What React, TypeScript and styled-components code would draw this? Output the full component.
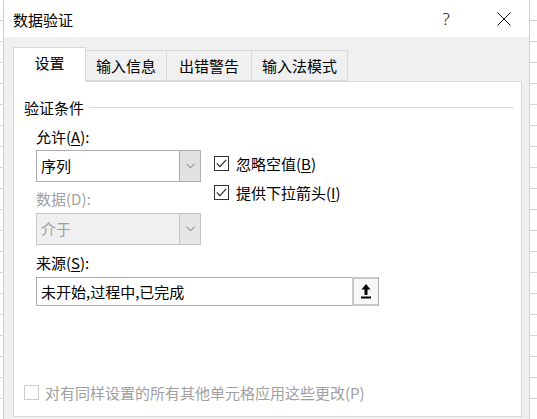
import React from "react"
import styled, { createGlobalStyle } from "styled-components"

const GlobalStyle = createGlobalStyle`
  html, body {
    margin: 0;
    padding: 0;
  }
  body {
    width: 537px;
    height: 419px;
    overflow: hidden;
    background-color: #ffffff;
    background-image: repeating-linear-gradient(
      to bottom,
      transparent 0,
      transparent 20px,
      #d4d4d4 20px,
      #d4d4d4 21px
    );
    font-family: "Noto Sans CJK SC", "Noto Sans", sans-serif;
    font-size: 15px;
    color: #000;
  }
`

const Dialog = styled.div`
  box-sizing: border-box;
  width: 527px;
  height: 419px;
  margin-left: 3px;
  display: flex;
  flex-direction: column;
  background: #f0f0f0;
  border-left: 1px solid #cfcfcf;
  border-right: 1px solid #cfcfcf;
`

const TitleBar = styled.div`
  height: 37px;
  flex: none;
  display: flex;
  align-items: center;
  background: #ffffff;
  padding-left: 9px;
  padding-right: 2px;
`

const Title = styled.span`
  flex: 1;
  line-height: 20px;
  margin-top: 2px;
`

const TitleButton = styled.div<{ $gap?: number }>`
  width: 46px;
  height: 37px;
  display: flex;
  align-items: center;
  justify-content: center;
  margin-right: ${p => p.$gap || 0}px;
  font-family: "Noto Sans", sans-serif;
  font-size: 17px;
  font-weight: 300;
  color: #111;
`

const Body = styled.div`
  flex: 1;
  padding: 10px 7px 0 9px;
`

const TabList = styled.div`
  display: flex;
  align-items: flex-end;
  height: 34px;
`

const Tab = styled.div<{ $width: number; $active?: boolean }>`
  box-sizing: border-box;
  width: ${p => p.$width}px;
  height: ${p => (p.$active ? 35 : 31)}px;
  margin-bottom: ${p => (p.$active ? -1 : 0)}px;
  margin-left: ${p => (p.$active ? 0 : -1)}px;
  position: relative;
  z-index: ${p => (p.$active ? 2 : 1)};
  display: flex;
  align-items: center;
  justify-content: center;
  padding-bottom: ${p => (p.$active ? 4 : 0)}px;
  background: ${p => (p.$active ? "#ffffff" : "#f0f0f0")};
  border: 1px solid #d9d9d9;
  border-bottom: ${p => (p.$active ? "none" : "1px solid #d9d9d9")};
  line-height: 20px;
  &:first-child {
    margin-left: 0;
  }
`

const Panel = styled.div`
  box-sizing: border-box;
  height: 336px;
  display: flex;
  flex-direction: column;
  background: #ffffff;
  border: 1px solid #d9d9d9;
  padding: 15px 7px 14px 10px;
`

const GroupHeader = styled.div`
  display: flex;
  align-items: center;
  height: 20px;
  &::after {
    content: "";
    flex: 1;
    height: 1px;
    margin-left: 5px;
    background: #dcdcdc;
  }
`

const Form = styled.div`
  padding-left: 12px;
  margin-top: 10px;
`

const TopRow = styled.div`
  display: flex;
`

const LeftColumn = styled.div`
  width: 165px;
  display: flex;
  flex-direction: column;
`

const Label = styled.div<{ $disabled?: boolean; $gap?: number }>`
  line-height: 20px;
  margin-bottom: ${p => p.$gap || 0}px;
  color: ${p => (p.$disabled ? "#a0a0a0" : "#000")};
  u {
    text-decoration-thickness: 1px;
    text-underline-offset: 2px;
  }
`

const Combo = styled.div<{ $disabled?: boolean }>`
  box-sizing: border-box;
  height: 32px;
  display: flex;
  border: 1px solid ${p => (p.$disabled ? "#c4c4c4" : "#adadad")};
  background: ${p => (p.$disabled ? "#f0f0f0" : "#ffffff")};
  color: ${p => (p.$disabled ? "#a0a0a0" : "#000")};
`

const ComboText = styled.div`
  flex: 1;
  display: flex;
  align-items: center;
  padding-left: 4px;
  line-height: 20px;
`

const ComboArrow = styled.div<{ $disabled?: boolean }>`
  width: 20px;
  display: flex;
  align-items: center;
  justify-content: center;
  background: ${p => (p.$disabled ? "#e6e6e6" : "#e1e1e1")};
  border-left: 1px solid ${p => (p.$disabled ? "#c4c4c4" : "#adadad")};
`

const CheckColumn = styled.div`
  display: flex;
  flex-direction: column;
  gap: 9px;
  margin-left: 13px;
  padding-top: 26px;
`

const CheckRow = styled.label<{ $disabled?: boolean }>`
  display: flex;
  align-items: center;
  height: 20px;
  gap: 7px;
  color: ${p => (p.$disabled ? "#a0a0a0" : "#000")};
  u {
    text-decoration-thickness: 1px;
    text-underline-offset: 2px;
  }
`

const Box = styled.span<{ $disabled?: boolean }>`
  box-sizing: border-box;
  width: 15px;
  height: 15px;
  flex: none;
  display: flex;
  align-items: center;
  justify-content: center;
  background: #ffffff;
  border: 1px solid ${p => (p.$disabled ? "#cccccc" : "#333333")};
`

const SourceInput = styled.div`
  box-sizing: border-box;
  width: 343px;
  height: 29px;
  display: flex;
  border: 1px solid #adadad;
  background: #ffffff;
`

const InputText = styled.div`
  flex: 1;
  display: flex;
  align-items: center;
  padding-left: 4px;
  line-height: 20px;
`

const PickButton = styled.div`
  box-sizing: border-box;
  width: 26px;
  display: flex;
  align-items: center;
  justify-content: center;
  background: #f7f7f7;
  border: 2px solid #c8c8c8;
  border-right: none;
  margin: -1px 0 -1px 0;
`

const BottomRow = styled(CheckRow)`
  margin-top: auto;
  gap: 6px;
`

const Chevron = () => (
  <svg width="9" height="6" viewBox="0 0 9 6">
    <polyline points="0.5,0.8 4.5,4.8 8.5,0.8" fill="none" stroke="#707070" strokeWidth="1" />
  </svg>
)

const Check = () => (
  <svg width="11" height="9" viewBox="0 0 11 9">
    <polyline points="0.8,4.4 3.8,7.6 10.2,0.8" fill="none" stroke="#222" strokeWidth="1.1" />
  </svg>
)

const CloseIcon = () => (
  <svg width="14" height="14" viewBox="0 0 14 14">
    <path d="M0.5 0.5 L13.5 13.5 M13.5 0.5 L0.5 13.5" stroke="#111" strokeWidth="1" />
  </svg>
)

const UploadIcon = () => (
  <svg width="10" height="15" viewBox="0 0 10 15">
    <polygon points="5,0 9.5,5.5 6.5,5.5 6.5,11 3.5,11 3.5,5.5 0.5,5.5" fill="#000" />
    <rect x="0" y="12.5" width="10" height="2" fill="#000" />
  </svg>
)

const tabs = [
  { title: "设置", width: 73 },
  { title: "输入信息", width: 82 },
  { title: "出错警告", width: 86 },
  { title: "输入法模式", width: 97 },
]

const App = () => {
  return (
    <>
      <GlobalStyle />
      <Dialog>
        <TitleBar>
          <Title>数据验证</Title>
          <TitleButton $gap={12}>?</TitleButton>
          <TitleButton>
            <CloseIcon />
          </TitleButton>
        </TitleBar>
        <Body>
          <TabList>
            {tabs.map((t, i) => (
              <Tab key={t.title} $width={t.width} $active={i === 0}>
                {t.title}
              </Tab>
            ))}
          </TabList>
          <Panel>
            <GroupHeader>验证条件</GroupHeader>
            <Form>
              <TopRow>
                <LeftColumn>
                  <Label $gap={3}>
                    允许(<u>A</u>):
                  </Label>
                  <Combo>
                    <ComboText>序列</ComboText>
                    <ComboArrow>
                      <Chevron />
                    </ComboArrow>
                  </Combo>
                  <Label $disabled $gap={4} style={{ marginTop: 7 }}>
                    数据(D):
                  </Label>
                  <Combo $disabled>
                    <ComboText>介于</ComboText>
                    <ComboArrow $disabled>
                      <Chevron />
                    </ComboArrow>
                  </Combo>
                </LeftColumn>
                <CheckColumn>
                  <CheckRow>
                    <Box>
                      <Check />
                    </Box>
                    <span>
                      忽略空值(<u>B</u>)
                    </span>
                  </CheckRow>
                  <CheckRow>
                    <Box>
                      <Check />
                    </Box>
                    <span>
                      提供下拉箭头(<u>I</u>)
                    </span>
                  </CheckRow>
                </CheckColumn>
              </TopRow>
              <Label $gap={4} style={{ marginTop: 8 }}>
                来源(<u>S</u>):
              </Label>
              <SourceInput>
                <InputText>未开始,过程中,已完成</InputText>
                <PickButton>
                  <UploadIcon />
                </PickButton>
              </SourceInput>
            </Form>
            <BottomRow $disabled>
              <Box $disabled />
              <span>对有同样设置的所有其他单元格应用这些更改(P)</span>
            </BottomRow>
          </Panel>
        </Body>
      </Dialog>
    </>
  )
}

export default App
